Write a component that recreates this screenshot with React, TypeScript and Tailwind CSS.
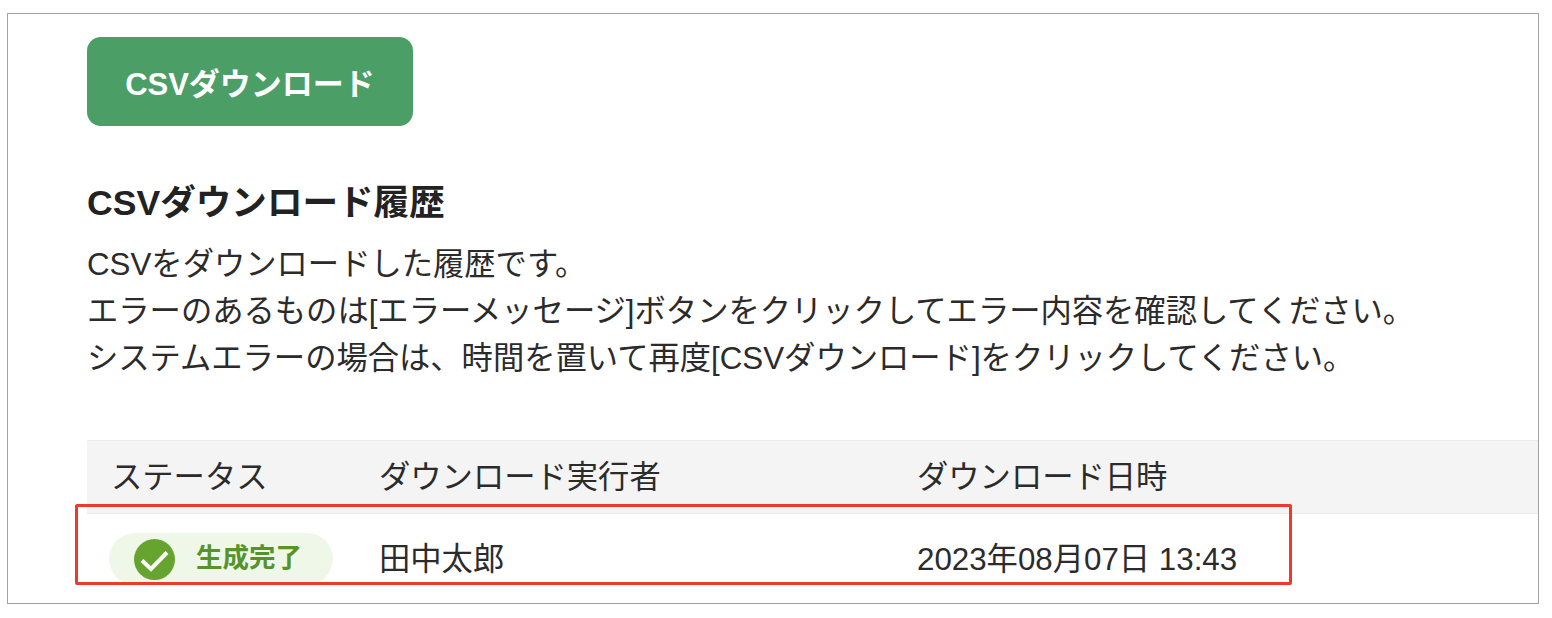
import React from 'react';

const fontStack = "font-['Liberation_Sans','Noto_Sans_CJK_JP',sans-serif]";

const App = () => {
  return (
    <div className={`w-[1552px] h-[618px] bg-white pt-[13px] pl-[7px] ${fontStack}`}>
      <div className="relative w-[1532px] h-[591px] border border-[#a3a3a3] bg-white pl-[79px] pt-[23px] overflow-hidden">
        <button className="flex items-center justify-center w-[326px] h-[89px] pt-[8px] rounded-[14px] bg-[#4a9e66] text-white text-[31px] font-bold">
          CSVダウンロード
        </button>

        <h2 className="mt-[54px] h-[48px] flex items-center text-[35.6px] font-bold text-[#222222]">CSVダウンロード履歴</h2>

        <div className="mt-[13px] text-[31.3px] leading-[47px] text-[#2b2b2b]">
          <p>CSVをダウンロードした履歴です。</p>
          <p>エラーのあるものは[エラーメッセージ]ボタンをクリックしてエラー内容を確認してください。</p>
          <p>システムエラーの場合は、時間を置いて再度[CSVダウンロード]をクリックしてください。</p>
        </div>

        {/* Table */}
        <div className="mt-[58px] text-[31.3px] text-[#2b2b2b]">
          <div className="flex items-center h-[74px] pt-[2px] bg-[#f4f4f4] border-y border-[#ebebeb] pl-[24px]">
            <div className="w-[268px]">ステータス</div>
            <div className="w-[538px]">ダウンロード実行者</div>
            <div>ダウンロード日時</div>
          </div>
          <div className="flex items-center pl-[22px] pt-[19px]">
            <div className="w-[270px]">
              <div className="flex items-center w-[224px] h-[52px] rounded-full bg-[#eff7e8] pl-[25px] gap-[21px] text-[#57932b] text-[26.5px] font-bold">
                <svg width="41" height="41" viewBox="0 0 41 41">
                  <circle cx="20.5" cy="20.5" r="20.5" fill="#66a42f" />
                  <path d="M8 21.5l9 8.5L33 13.5" fill="none" stroke="#ffffff" strokeWidth="4" />
                </svg>
                <span>生成完了</span>
              </div>
            </div>
            <div className="w-[538px] pt-[2px]">田中太郎</div>
            <div className="pt-[2px]">2023年08月07日 13:43</div>
          </div>
        </div>

        {/* Red highlight */}
        <div className="absolute left-[67px] top-[490px] w-[1217px] h-[81px] border-[3px] border-[#ee3a2c] rounded-[2px]" />
      </div>
    </div>
  );
};

export default App;
